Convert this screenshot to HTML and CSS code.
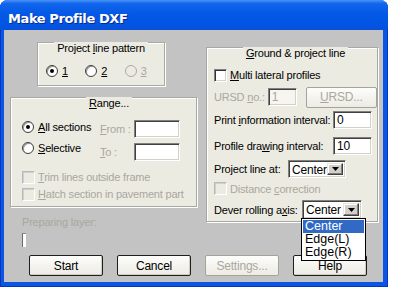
FILE: index.html
```html
<!DOCTYPE html>
<html lang="en">
<head>
    <meta charset="UTF-8">
    <meta name="viewport" content="width=device-width, initial-scale=1.0">
    <title>Make Profile DXF</title>
    <link rel="stylesheet" href="styles.css">
</head>
<body>
    <div class="window">
        <div class="titlebar">Make Profile DXF</div>

        <div class="client">
            <div class="columns">
                <!-- Left column -->
                <div class="col-left">
                    <div class="group pattern">
                        <div class="group-title">Project <u>l</u>ine pattern</div>
                        <div class="radio-row">
                            <label class="opt"><span class="radio checked"></span><span><u>1</u></span></label>
                            <label class="opt"><span class="radio"></span><span><u>2</u></span></label>
                            <label class="opt disabled"><span class="radio"></span><span><u>3</u></span></label>
                        </div>
                    </div>

                    <div class="group range">
                        <div class="group-title"><u>R</u>ange...</div>
                        <div class="range-body">
                            <div class="range-modes">
                                <label class="opt"><span class="radio checked"></span><span><u>A</u>ll sections</span></label>
                                <label class="opt"><span class="radio"></span><span><u>S</u>elective</span></label>
                            </div>
                            <div class="range-fields">
                                <span class="disabled"><u>F</u>rom :</span>
                                <span class="input"></span>
                                <span class="disabled"><u>T</u>o :</span>
                                <span class="input"></span>
                            </div>
                        </div>
                        <label class="opt disabled check-trim"><span class="check"></span><span><u>T</u>rim lines outside frame</span></label>
                        <label class="opt disabled check-hatch"><span class="check"></span><span><u>H</u>atch section in pavement part</span></label>
                    </div>

                    <div class="layer">
                        <div class="disabled">Preparing layer:</div>
                        <div class="progress"></div>
                    </div>
                </div>

                <!-- Right column -->
                <div class="group ground">
                    <div class="group-title"><u>G</u>round &amp; project line</div>
                    <label class="opt row-multi"><span class="check"></span><span><u>M</u>ulti lateral profiles</span></label>
                    <div class="row row-ursd">
                        <span class="lbl-ursd disabled">URSD <u>n</u>o.:</span>
                        <span class="input input-ursd">1</span>
                        <span class="btn btn-ursd disabled"><span><u>U</u>RSD...</span></span>
                    </div>
                    <div class="row row-print">
                        <span>Print <u>i</u>nformation interval:</span>
                        <span class="input input-num">0</span>
                    </div>
                    <div class="row row-profile">
                        <span>Profile dra<u>w</u>ing interval:</span>
                        <span class="input input-num">10</span>
                    </div>
                    <div class="row row-project">
                        <span class="lbl-project">Project line at:</span>
                        <span class="combo combo-project">
                            <span class="combo-text">Center</span>
                            <span class="combo-btn">
                                <svg width="7" height="4" viewBox="0 0 7 4"><polygon points="0,0 7,0 3.5,4" fill="#000"/></svg>
                            </span>
                        </span>
                    </div>
                    <label class="opt disabled row-distance"><span class="check"></span><span>Distance <u>c</u>orrection</span></label>
                    <div class="row row-dever">
                        <span class="lbl-dever">Dever rolling a<u>x</u>is:</span>
                        <span class="combo combo-dever">
                            <span class="combo-text">Center</span>
                            <span class="combo-btn">
                                <svg width="7" height="4" viewBox="0 0 7 4"><polygon points="0,0 7,0 3.5,4" fill="#000"/></svg>
                            </span>
                            <!-- open dropdown list -->
                            <ul class="dropdown">
                                <li class="selected">Center</li>
                                <li>Edge(L)</li>
                                <li>Edge(R)</li>
                            </ul>
                        </span>
                    </div>
                </div>
            </div>

            <div class="buttons">
                <span class="btn">Start</span>
                <span class="btn">Cancel</span>
                <span class="btn disabled">Settings...</span>
                <span class="btn">Help</span>
            </div>
        </div>
    </div>
</body>
</html>
```

FILE: styles.css
```css
/* Basic Styling */
body {
    margin: 0;
    background-color: #fff;
    font-family: "Liberation Sans", Arial, sans-serif;
    font-size: 11px;
    letter-spacing: -0.2px;
    color: #000;
}

u {
    text-decoration-thickness: 1px;
    text-underline-offset: 1px;
}

.window {
    width: 388px;
    height: 287px;
    box-sizing: border-box;
    padding: 0 5px 5px 4px;
    display: flex;
    flex-direction: column;
    background-color: #0a55e2;
    border-radius: 8px 8px 0 0;
    box-shadow: inset 1px 0 0 #0634c4, inset -1px -1px 0 #0634c4;
}

.titlebar {
    height: 26px;
    padding: 4px 0 0 8px;
    margin: 0 -5px 0 -4px;
    border-radius: 8px 8px 0 0;
    background: linear-gradient(#4a93f7 0%, #1266ec 12%, #0358e6 45%, #0255e3 85%, #0a4fd6 100%);
    color: #fff;
    font-family: "DejaVu Sans", sans-serif;
    font-weight: bold;
    font-size: 13px;
    letter-spacing: -0.4px;
    line-height: 30px;
    text-shadow: 1px 1px 0 #0b2a8c;
}

.client {
    flex: 1;
    display: flex;
    flex-direction: column;
    background-color: #c3c3c3;
}

.columns {
    display: flex;
    align-items: flex-start;
    gap: 9px;
    padding: 0 5px 0 6px;
}

.col-left {
    width: 187px;
    display: flex;
    flex-direction: column;
}

/* Group boxes */
.group {
    box-sizing: border-box;
    background-color: #ecebe2;
    border: 1px solid #a8a8a4;
    box-shadow: inset 1px 1px 0 #fff, 1px 1px 0 #fff;
}

.group-title {
    width: fit-content;
    margin: -1px auto 0;
    padding: 0 3px;
    line-height: 13px;
    background-color: #ecebe2;
}

.pattern {
    width: 128px;
    height: 44px;
    margin: 12px 0 0 27px;
}

.radio-row {
    display: flex;
    margin-top: 9px;
    padding-left: 8px;
}

.radio-row .opt {
    width: 40px;
}

.range {
    height: 110px;
    margin-top: 11px;
    padding-left: 11px;
}

.range-body {
    display: flex;
}

.range-modes {
    width: 78px;
    display: flex;
    flex-direction: column;
    gap: 7px;
    margin-top: 10px;
}

.range-fields {
    display: grid;
    grid-template-columns: 34px 46px;
    grid-auto-rows: 18px;
    row-gap: 5px;
    align-items: center;
    margin-top: 10px;
}

.check-trim {
    margin-top: 9px;
}

.check-hatch {
    margin-top: 3px;
}

.layer {
    margin: 9px 0 0 12px;
    line-height: 13px;
}

.progress {
    width: 3px;
    height: 13px;
    margin-top: 4px;
    background-color: #fff;
    border-left: 1px solid #6d6d6d;
    border-top: 1px solid #8a8a8a;
}

/* Options */
.opt {
    display: flex;
    align-items: center;
    height: 14px;
    line-height: 14px;
    white-space: nowrap;
}

.disabled {
    color: #a9a79e;
}

.radio {
    width: 12px;
    height: 12px;
    box-sizing: border-box;
    margin-right: 4px;
    border-radius: 50%;
    border: 1px solid #3c3c3c;
    background-color: #fff;
    box-shadow: inset 1px 1px 0 #9a9a9a;
    display: flex;
    align-items: center;
    justify-content: center;
}

.radio.checked::after {
    content: "";
    width: 4px;
    height: 4px;
    border-radius: 50%;
    background-color: #000;
}

.opt.disabled .radio {
    border-color: #a9a9a9;
    background-color: #ecebe2;
    box-shadow: none;
}

.check {
    width: 13px;
    height: 13px;
    box-sizing: border-box;
    margin-right: 3px;
    border: 1px solid;
    border-color: #808080 #fff #fff #808080;
    box-shadow: inset 1px 1px 0 #333, inset -1px -1px 0 #d6d3ca;
    background-color: #fff;
}

.opt.disabled .check {
    background-color: #ecebe2;
    border-color: #b8b8b8 #fff #fff #b8b8b8;
    box-shadow: inset 1px 1px 0 #d0d0d0;
}

/* Inputs */
.input {
    box-sizing: border-box;
    height: 18px;
    padding-left: 3px;
    line-height: 16px;
    border: 1px solid;
    border-color: #808080 #fff #fff #808080;
    box-shadow: inset 1px 1px 0 #404040, inset -1px -1px 0 #d4d0c8;
    background-color: #fff;
    font-size: 12px;
}

/* Ground & project line */
.ground {
    width: 172px;
    height: 175px;
    margin-top: 17px;
    padding-left: 7px;
}

.row {
    display: flex;
    align-items: center;
}

.row-multi {
    margin-top: 8px;
}

.row-ursd {
    height: 20px;
    margin-top: 5px;
}

.lbl-ursd {
    width: 56px;
}

.input-ursd {
    width: 30px;
    color: #a9a79e;
    background-color: #f6f5f0;
}

.btn-ursd {
    width: 64px;
    height: 20px;
    margin-left: 9px;
}

.row-print {
    margin-top: 4px;
}

.row-profile {
    margin-top: 8px;
}

.input-num {
    width: 39px;
    margin-left: auto;
    margin-right: 5px;
}

.row-project {
    margin-top: 5px;
}

.lbl-project {
    width: 74px;
}

.row-distance {
    height: 13px;
    margin-top: 4px;
}

.row-dever {
    margin-top: 5px;
}

.lbl-dever {
    width: 88px;
}

/* Combo boxes */
.combo {
    position: relative;
    box-sizing: border-box;
    display: flex;
    height: 18px;
    border: 1px solid;
    border-color: #808080 #fff #fff #808080;
    box-shadow: inset 1px 1px 0 #404040, inset -1px -1px 0 #d4d0c8;
    background-color: #fff;
    padding: 2px;
    font-size: 12px;
}

.combo-project {
    width: 58px;
}

.combo-dever {
    width: 60px;
    height: 19px;
}

.combo-text {
    flex: 1;
    padding-left: 1px;
    line-height: 14px;
}

.combo-btn {
    width: 16px;
    box-sizing: border-box;
    display: flex;
    align-items: center;
    justify-content: center;
    background-color: #d4d0c8;
    border: 1px solid;
    border-color: #e8e6df #404040 #404040 #e8e6df;
    box-shadow: inset -1px -1px 0 #808080, inset 1px 1px 0 #fff;
}

.dropdown {
    position: absolute;
    top: 17px;
    left: -2px;
    z-index: 10;
    width: 65px;
    box-sizing: border-box;
    margin: 0;
    padding: 1px;
    list-style-type: none;
    background-color: #fff;
    border: 1px solid #000;
    font-size: 12.5px;
    letter-spacing: 0;
}

.dropdown li {
    height: 13px;
    line-height: 13px;
    padding-left: 2px;
}

.dropdown .selected {
    background-color: #316ac5;
    color: #fff;
}

/* Buttons */
.buttons {
    display: flex;
    gap: 14px;
    margin-top: auto;
    padding: 0 0 6px 25px;
}

.btn {
    box-sizing: border-box;
    width: 74px;
    height: 21px;
    display: flex;
    align-items: center;
    justify-content: center;
    border: 1px solid #1f1f1f;
    border-radius: 2px;
    background: linear-gradient(#fdfdfb, #ecebe4);
    box-shadow: inset -1px -1px 0 #cfccc0;
    font-size: 12px;
}

.btn.disabled {
    border-color: #a6a49a;
    color: #aaa89e;
    box-shadow: none;
}
```
